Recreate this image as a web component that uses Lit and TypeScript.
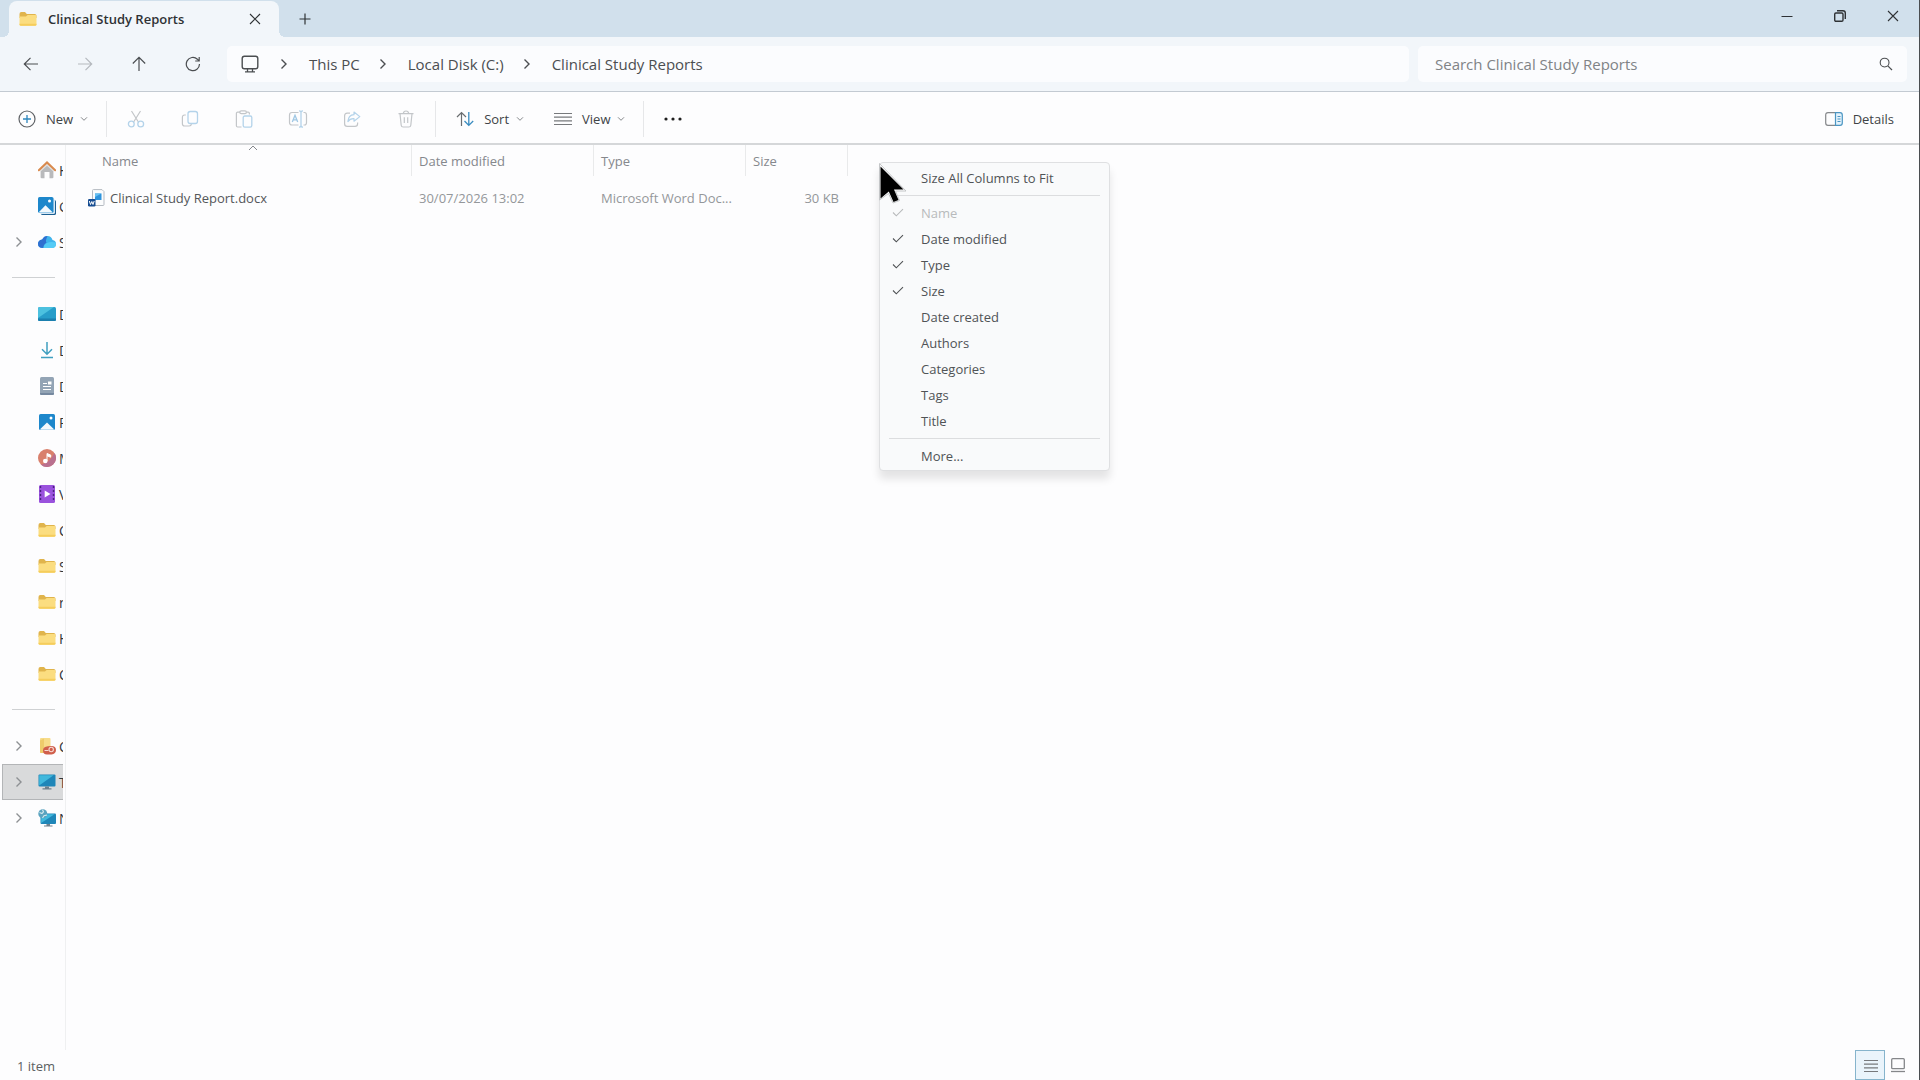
import { LitElement, html, css, svg, nothing, TemplateResult } from "lit";
import { customElement, property, state } from "lit/decorators.js";
import { classMap } from "lit/directives/class-map.js";

type Glyph = { w: number; h: number; body: unknown };

const GLYPHS: Record<string, Glyph> = {
  folder: {
    w: 18, h: 16,
    body: svg`<path d="M.5 3Q.5 1 2.300 1H6l1.800 2H15.800Q17.500 3 17.500 4.800V7H.5Z" fill="#e0b44c"/>
      <path d="M.5 5.600H7L8.600 4H16.300q1.200 0 1.200 1.200V13.300q0 1.500-1.500 1.500H2Q.5 14.800.5 13.300Z" fill="#fbdd80"/>
      <path d="M.5 12.800V13.300q0 1.500 1.500 1.500H16Q17.500 14.800 17.500 13.300V12.800Z" fill="#f5cd5c"/>`,
  },
  close: { w: 12, h: 12, body: svg`<path d="M1 1 11 11M11 1 1 11" stroke="currentColor" stroke-width="1.1"/>` },
  plus: { w: 12, h: 12, body: svg`<path d="M6 .5V11.500M.5 6H11.500" stroke="currentColor" stroke-width="1.2"/>` },
  minimize: { w: 12, h: 12, body: svg`<path d="M.5 6.500H11.500" stroke="currentColor" stroke-width="1"/>` },
  restore: {
    w: 12, h: 12,
    body: svg`<rect x=".7" y="3" width="8.300" height="8.300" rx="1.200" fill="none" stroke="currentColor" stroke-width="1.4"/>
      <path d="M3 .8H9Q11.300 .8 11.300 3V9" fill="none" stroke="currentColor" stroke-width="1.4"/>`,
  },
  back: { w: 16, h: 16, body: svg`<path d="M15 8H1.500M7.500 1.800 1.300 8l6.200 6.200" fill="none" stroke="currentColor" stroke-width="1.2"/>` },
  forward: { w: 16, h: 16, body: svg`<path d="M1 8H14.500M8.500 1.800 14.700 8l-6.200 6.200" fill="none" stroke="currentColor" stroke-width="1.2"/>` },
  up: { w: 16, h: 16, body: svg`<path d="M8 15V1.500M1.800 7.500 8 1.300l6.200 6.200" fill="none" stroke="currentColor" stroke-width="1.2"/>` },
  refresh: {
    w: 16, h: 16,
    body: svg`<path d="M14.500 8A6.600 6.600 0 1 1 12.400 3.200L14 4.800M14.200 1V5H10.200" fill="none" stroke="currentColor" stroke-width="1.2"/>`,
  },
  pc: {
    w: 18, h: 18,
    body: svg`<rect x="1.200" y="1.200" width="15.600" height="12.600" rx="2.200" fill="none" stroke="currentColor" stroke-width="1.400"/>
      <path d="M6.500 14V16.500M11.500 14V16.500M4 16.800H14" fill="none" stroke="currentColor" stroke-width="1.300"/>`,
  },
  chevron: { w: 8, h: 12, body: svg`<path d="M1.500 1.500 6 6l-4.500 4.500" fill="none" stroke="currentColor" stroke-width="1.4"/>` },
  chevronDown: { w: 8, h: 6, body: svg`<path d="M1 1.300 4 4.300l3-3" fill="none" stroke="currentColor" stroke-width="1"/>` },
  chevronUp: { w: 10, h: 6, body: svg`<path d="M1 5 5 1l4 4" fill="none" stroke="currentColor" stroke-width="1"/>` },
  search: {
    w: 14, h: 14,
    body: svg`<circle cx="5.600" cy="5.600" r="4.400" fill="none" stroke="currentColor" stroke-width="1.1"/>
      <path d="M8.800 8.800 13 13" stroke="currentColor" stroke-width="1.2"/>`,
  },
  add: {
    w: 18, h: 18,
    body: svg`<circle cx="9" cy="9" r="8" fill="none" stroke="#5f6266" stroke-width="1.2"/>
      <path d="M9 5V13M5 9H13" stroke="#2f87bd" stroke-width="1.3"/>`,
  },
  cut: {
    w: 18, h: 18,
    body: svg`<path d="M4.500 1 11.700 12.500M13.500 1 6.300 12.500" stroke="#c3c6c9" stroke-width="1.200"/>
      <circle cx="4.300" cy="14" r="2.900" fill="none" stroke="#b4d3ea" stroke-width="1.300"/>
      <circle cx="13.700" cy="14" r="2.900" fill="none" stroke="#b4d3ea" stroke-width="1.300"/>`,
  },
  copy: {
    w: 18, h: 18,
    body: svg`<path d="M4.800 5H3.600Q1.400 5 1.400 7.200V13.800Q1.400 16 3.600 16H8.200Q10.200 16 10.400 14" fill="none" stroke="#c3c6c9" stroke-width="1.200"/>
      <rect x="7" y="1.500" width="9.500" height="12" rx="2.200" fill="none" stroke="#b4d3ea" stroke-width="1.300"/>`,
  },
  paste: {
    w: 18, h: 18,
    body: svg`<path d="M5 2.200H2.600Q1.400 2.200 1.400 3.600V15.800Q1.400 17 2.600 17H6.500M11.500 2.200H13.200Q14.400 2.200 14.400 3.600V4.500" fill="none" stroke="#c3c6c9" stroke-width="1.200"/>
      <rect x="4.800" y=".8" width="6.600" height="2.800" rx="1.400" fill="none" stroke="#c3c6c9" stroke-width="1.200"/>
      <rect x="8.200" y="6" width="8.600" height="11.200" rx="1.600" fill="none" stroke="#b4d3ea" stroke-width="1.300"/>`,
  },
  rename: {
    w: 20, h: 18,
    body: svg`<path d="M10.500 2.500H4Q1.500 2.500 1.500 5V12.500Q1.500 15 4 15H10.500M15.500 2.500H16.500Q18.500 2.500 18.500 5V12.500Q18.500 15 16.500 15H15.500" fill="none" stroke="#c3c6c9" stroke-width="1.200"/>
      <path d="M4.300 12 7 5.200 9.700 12M5.200 9.800H8.800" fill="none" stroke="#9fc7e4" stroke-width="1.300"/>
      <path d="M11 .8Q13 .8 13 2.500V15.500Q13 17.200 11 17.200M15 .8Q13 .8 13 2.500M13 15.500Q13 17.200 15 17.200" fill="none" stroke="#b4d3ea" stroke-width="1.300"/>`,
  },
  share: {
    w: 18, h: 18,
    body: svg`<path d="M7 3.200H4.200Q1.600 3.200 1.600 5.800V13.800Q1.600 16.400 4.200 16.400H12Q14.600 16.400 14.600 13.800V12.500" fill="none" stroke="#c3c6c9" stroke-width="1.200"/>
      <path d="M11 2 16.800 6.600 11 11.200V8.600Q7 8.300 4.900 11.600 5.400 5 11 4.700Z" fill="none" stroke="#b4d3ea" stroke-width="1.200" stroke-linejoin="round"/>`,
  },
  trash: {
    w: 18, h: 18,
    body: svg`<path d="M1.500 3.600H16.500M6.300 3.400Q6.600 1 9 1t2.700 2.400M3 3.800 4.200 15.200Q4.400 17 6.200 17H11.800Q13.600 17 13.800 15.200L15 3.800M7.300 7.200V13M10.700 7.200V13" fill="none" stroke="#c3c6c9" stroke-width="1.200"/>`,
  },
  sort: {
    w: 18, h: 16,
    body: svg`<path d="M5.500 15V1.500M1 6 5.500 1.500 10 6" fill="none" stroke="#6a6d70" stroke-width="1.200"/>
      <path d="M12.800 1V14.500M8.500 10 12.800 14.400 17.200 10" fill="none" stroke="#3a8cc0" stroke-width="1.300"/>`,
  },
  view: { w: 18, h: 14, body: svg`<path d="M0 1.500H18M0 5.200H18M0 8.800H18M0 12.500H18" stroke="#77797c" stroke-width="1.200"/>` },
  more: {
    w: 18, h: 6,
    body: svg`<circle cx="2" cy="3" r="1.600" fill="#1f1f1f"/><circle cx="9" cy="3" r="1.600" fill="#1f1f1f"/><circle cx="16" cy="3" r="1.600" fill="#1f1f1f"/>`,
  },
  details: {
    w: 18, h: 14,
    body: svg`<path d="M10.500 .7H3Q.7 .7 .7 3V11Q.7 13.300 3 13.300H10.500" fill="none" stroke="#85888b" stroke-width="1.200"/>
      <path d="M10.500 .7H15Q17.300 .7 17.300 3V11Q17.300 13.300 15 13.300H10.500Z" fill="#e4f2fb" stroke="#4b95c2" stroke-width="1.200"/>
      <path d="M12.500 4.500H15.500M12.500 7H15.500M12.500 9.500H15.500" stroke="#4b95c2" stroke-width="1"/>`,
  },
  check: { w: 12, h: 10, body: svg`<path d="M1 4.500 4.300 7.800 11 1.100" fill="none" stroke="currentColor" stroke-width="1.1"/>` },
  home: {
    w: 18, h: 18,
    body: svg`<path d="M2.600 8 9 2l6.400 6V16.200Q15.400 17.300 14.300 17.300H11.500V11H6.500v6.300H3.700Q2.600 17.300 2.600 16.200Z" fill="#b9babc"/>
      <path d="M2.600 8 9 2l6.400 6v2.500L9 4.800 2.600 10.500Z" fill="#e2e3e4"/>
      <path d="M.8 9.300 9 1.500l8.200 7.800" fill="none" stroke="#d98a4e" stroke-width="2" stroke-linecap="round"/>`,
  },
  gallery: {
    w: 18, h: 18,
    body: svg`<rect x="3" y="3" width="15" height="15" rx="1.600" fill="#1b5f92"/>
      <rect x="2" y="2" width="15" height="15" rx="1.600" fill="#d8e8f4"/>
      <rect x="0" y="0" width="15.500" height="15.800" rx="1.600" fill="#1d87cb"/>
      <path d="M1 15 7.500 8.300 14.300 15Q14 15.500 13.500 15.500H1.800Z" fill="#f3f9fd"/><circle cx="11.500" cy="4" r="1.500" fill="#fff"/>`,
  },
  cloud: {
    w: 18, h: 18,
    body: svg`<path d="M5 15Q0 15 0 10.700 0 7 4.200 6.400 6 3 9.500 3q3.800 0 5 4 3.500.5 3.500 4t-3.700 4Z" fill="#3fb4ec"/>
      <path d="M5 15Q0 15 0 10.700 0 7 4.200 6.400 6 3 9.500 3 7 8 8.500 9.500 6 11 5 15Z" fill="#2f6fd0"/>
      <path d="M6 15Q5.500 11.500 9 10T17.800 9.500Q18.500 15 14.300 15Z" fill="#55cbf6"/>`,
  },
  desktop: {
    w: 18, h: 16,
    body: svg`<rect y="1" width="18" height="14" rx="1.500" fill="#279dc9"/>
      <path d="M0 12V2.500Q0 1 1.500 1H16Z" fill="#4cc1df"/><path d="M0 12.500H18V13.500Q18 15 16.500 15H1.500Q0 15 0 13.500Z" fill="#1b7fae"/>`,
  },
  download: {
    w: 14, h: 18,
    body: svg`<path d="M7 1V13M2 8.300 7 13.200l5-4.900M1 16.500H13" fill="none" stroke="#3f9fc0" stroke-width="1.500"/>`,
  },
  document: {
    w: 14, h: 18,
    body: svg`<rect y="0" width="14" height="18" rx="1.500" fill="#93a4b5"/><path d="M0 16H14V16.500Q14 18 12.500 18H1.500Q0 18 0 16.500Z" fill="#7689a0"/>
      <path d="M3 6.500H7M3 9.500H11M3 12.500H11" stroke="#fff" stroke-width="1.200"/><rect x="8" y="4.500" width="3.500" height="3" fill="#fff"/>`,
  },
  picture: {
    w: 16, h: 16,
    body: svg`<rect width="16" height="16" rx="1.600" fill="#1d87cb"/>
      <path d="M1 15.300 8 8.500 15 15.300Q14.500 15.800 14 15.800H2Z" fill="#f3f9fd"/><circle cx="12" cy="4" r="1.500" fill="#fff"/>`,
  },
  music: {
    w: 18, h: 18,
    body: svg`<circle cx="9" cy="9" r="9" fill="#d9806c"/><path d="M16.500 4A9 9 0 0 1 3 15.700Q12 14 16.500 4Z" fill="#b9708f"/>
      <circle cx="7.300" cy="12" r="2.300" fill="#fff"/><path d="M9 12V4.500L12.700 6V8.200L9 6.800" fill="#fff" stroke="#fff" stroke-width="1"/>`,
  },
  video: {
    w: 16, h: 18,
    body: svg`<rect width="16" height="18" rx="1.500" fill="#9a52dd"/><path d="M1.500 1V17M14.500 1V17" stroke="#4a2280" stroke-width="1.400" stroke-dasharray="2 2"/>
      <path d="M5.700 5.500 11.500 9l-5.800 3.500Z" fill="#fff"/>`,
  },
  folderUser: {
    w: 18, h: 18,
    body: svg`<path d="M2 2Q2 1 3 1H11.500Q12.500 1 12.500 2V16H3Q2 16 2 15Z" fill="#f7dc8a"/><path d="M2 3.500 6 1.500V16H3Q2 16 2 15Z" fill="#eecb6b"/>
      <path d="M5 13.500Q5 9.500 10 9.200q2-.2 3.400-.2Q18 9.200 18 13t-4.500 4.500H9Q5 17.500 5 13.500Z" fill="#d05f4c"/>
      <circle cx="13.200" cy="12.500" r="2.200" fill="none" stroke="#f6d9d3" stroke-width="1.100"/><path d="M6.500 13.500h4" stroke="#f6d9d3" stroke-width="1"/>`,
  },
  monitor: {
    w: 18, h: 16,
    body: svg`<rect x=".5" y=".5" width="17" height="12" rx="1" fill="#1f86b8"/><path d="M1.200 11.500V1.200H15.500Z" fill="#41b8dc"/>
      <path d="M7 12.500H11V14.300H13.500V15.500H4.500V14.300H7Z" fill="#70808c"/>`,
  },
  network: {
    w: 18, h: 18,
    body: svg`<rect x="2.500" y="4.500" width="15.500" height="10.500" rx="1" fill="#1f86b8"/><path d="M3.200 14V5.200H16.500Z" fill="#41b8dc"/>
      <path d="M8.500 15H12V16.500H14.500V17.500H6V16.500H8.500Z" fill="#70808c"/><circle cx="4.800" cy="4.800" r="4.500" fill="#5aa3bf"/>
      <path d="M1.500 3.500 4 4.500 5.500 3 4.500.8M4.500 9 6 6.800 9 6" fill="none" stroke="#d4e9ee" stroke-width="1.100"/>`,
  },
  word: {
    w: 18, h: 18,
    body: svg`<path d="M4.500 1.500Q4.500.6 5.400.6H14l2 2V15.500Q16 16.500 15 16.500H5.400Q4.500 16.500 4.500 15.500Z" fill="#fbfcfd" stroke="#b5bbc2" stroke-width="1"/>
      <rect x="7" y="4.500" width="6.500" height="6.500" fill="#2f93dc"/><path d="M7 4.500h6.500L7 8Z" fill="#66c0f2"/>
      <rect x="0" y="10" width="7.500" height="7.500" rx="1.200" fill="#174d92"/>
      <path d="M1.300 12 2.500 15.500 3.800 12.500 5 15.500 6.200 12" fill="none" stroke="#fff" stroke-width="1"/>`,
  },
  listView: { w: 14, h: 14, body: svg`<path d="M0 1.500H14M0 5.200H14M0 8.800H14M0 12.500H14" stroke="#77797c" stroke-width="1.200"/>` },
  tileView: {
    w: 14, h: 16,
    body: svg`<rect x=".7" y="1.700" width="12.600" height="10" rx="1" fill="none" stroke="#85878a" stroke-width="1.300"/><path d="M0 14.500H14" stroke="#85878a" stroke-width="1.300"/>`,
  },
};

const icon = (name: string): TemplateResult => {
  const g = GLYPHS[name];
  return html`<svg class="icon" width=${g.w} height=${g.h} viewBox="0 0 ${g.w} ${g.h}" aria-hidden="true">${g.body}</svg>`;
};

const base = css`
  * { box-sizing: border-box; }
  .icon { display: block; flex: none; }
  button {
    display: flex; align-items: center; justify-content: center;
    border: 0; padding: 0; background: none; color: inherit; font: inherit;
  }
`;

@customElement("window-tabs")
class WindowTabs extends LitElement {
  @property() label = "";
  static styles = [base, css`
    :host { display: flex; align-items: flex-end; height: 37px; padding-left: 9px; background: #d1e0ec; color: #2f3235; }
    .tab {
      position: relative; display: flex; align-items: center; width: 270px; height: 36px; padding: 0 10px;
      background: #f2f6fa; border-radius: 8px 8px 0 0; font-weight: 600; font-size: 13px;
    }
    .tab::before, .tab::after { content: ""; position: absolute; bottom: 0; width: 6px; height: 6px; }
    .tab::before { right: 100%; background: radial-gradient(circle at 0 0, transparent 6px, #f2f6fa 6px); }
    .tab::after { left: 100%; background: radial-gradient(circle at 100% 0, transparent 6px, #f2f6fa 6px); }
    .label { flex: 1; margin-left: 11px; }
    .tab button { width: 28px; height: 28px; }
    .add { width: 52px; height: 36px; }
    .controls { display: flex; margin-left: auto; align-self: flex-start; }
    .controls button { width: 53px; height: 32px; }
  `];
  render() {
    return html`
      <div class="tab">${icon("folder")}<span class="label">${this.label}</span>
        <button aria-label="Close tab">${icon("close")}</button></div>
      <button class="add" aria-label="New tab">${icon("plus")}</button>
      <div class="controls">
        <button aria-label="Minimize">${icon("minimize")}</button>
        <button aria-label="Restore">${icon("restore")}</button>
        <button aria-label="Close">${icon("close")}</button>
      </div>`;
  }
}

@customElement("address-bar")
class AddressBar extends LitElement {
  @property({ attribute: false }) path: string[] = [];
  static styles = [base, css`
    :host {
      display: flex; align-items: center; height: 55px; padding: 0 12px 0 4px;
      background: #f2f6fa; border-bottom: 1px solid #c3cad2; color: #4b4e51; font-size: 15px;
    }
    .nav { width: 54px; height: 40px; }
    .nav:disabled { color: #b5b9be; }
    .crumbs {
      display: flex; align-items: center; flex: 1; height: 36px; margin-left: 7px; padding-left: 14px;
      background: #fbfcfe; border-radius: 5px;
    }
    .crumbs .icon { margin-right: 21px; }
    .crumbs a { color: inherit; text-decoration: none; margin-right: 19px; }
    .search {
      display: flex; align-items: center; width: 489px; height: 36px; margin-left: 9px; padding: 0 14px 0 17px;
      background: #fbfcfe; border-radius: 5px;
    }
    .search input { flex: 1; min-width: 0; border: 0; padding: 0; background: none; font: inherit; color: inherit; outline: 0; }
    .search input::placeholder { color: #808386; opacity: 1; }
  `];
  render() {
    return html`
      <button class="nav" aria-label="Back">${icon("back")}</button>
      <button class="nav" aria-label="Forward" disabled>${icon("forward")}</button>
      <button class="nav" aria-label="Up">${icon("up")}</button>
      <button class="nav" aria-label="Refresh">${icon("refresh")}</button>
      <nav class="crumbs" aria-label="Path">
        ${icon("pc")}${this.path.map((p) => html`${icon("chevron")}<a href="#">${p}</a>`)}
      </nav>
      <label class="search">
        <input type="text" aria-label="Search" placeholder="Search ${this.path[this.path.length - 1]}" />
        ${icon("search")}
      </label>`;
  }
}

@customElement("command-bar")
class CommandBar extends LitElement {
  static styles = [base, css`
    :host {
      display: flex; align-items: center; height: 53px; padding: 2px 25px 0 0;
      background: #fdfdfe; border-bottom: 2px solid #d5d7d9; color: #404346; font-size: 13px;
    }
    .menu { gap: 10px; height: 36px; padding: 0 16px 0 18px; }
    .menu.tight { padding-right: 12px; }
    .caret { margin-left: -3px; color: #85888b; }
    .tool { width: 54px; height: 36px; }
    .rule { width: 1px; height: 36px; margin: 0 2px; background: #e6e7e9; }
    .details { gap: 10px; height: 36px; margin-left: auto; }
  `];
  private menu(glyph: string, label: string, tight = false) {
    return html`<button class=${classMap({ menu: true, tight })}>${icon(glyph)}<span>${label}</span><span class="caret">${icon("chevronDown")}</span></button>`;
  }
  render() {
    const tools = [["cut", "Cut"], ["copy", "Copy"], ["paste", "Paste"], ["rename", "Rename"], ["share", "Share"], ["trash", "Delete"]];
    return html`
      ${this.menu("add", "New")}<span class="rule"></span>
      ${tools.map(([g, l]) => html`<button class="tool" aria-label=${l} disabled>${icon(g)}</button>`)}
      <span class="rule"></span>
      ${this.menu("sort", "Sort", true)}${this.menu("view", "View")}
      <span class="rule"></span>
      <button class="tool" aria-label="More">${icon("more")}</button>
      <button class="details">${icon("details")}<span>Details</span></button>`;
  }
}

type Place = { glyph: string; label: string; open?: boolean; selected?: boolean } | null;

const PLACES: Place[] = [
  { glyph: "home", label: "Home" },
  { glyph: "gallery", label: "Gallery" },
  { glyph: "cloud", label: "S", open: true },
  null,
  { glyph: "desktop", label: "Desktop" },
  { glyph: "download", label: "Downloads" },
  { glyph: "document", label: "Documents" },
  { glyph: "picture", label: "Pictures" },
  { glyph: "music", label: "Music" },
  { glyph: "video", label: "Videos" },
  { glyph: "folder", label: "C" },
  { glyph: "folder", label: "S" },
  { glyph: "folder", label: "r" },
  { glyph: "folder", label: "H" },
  { glyph: "folder", label: "C" },
  null,
  { glyph: "folderUser", label: "C", open: true },
  { glyph: "monitor", label: "This PC", open: true, selected: true },
  { glyph: "network", label: "Network", open: true },
];

@customElement("side-tree")
class SideTree extends LitElement {
  static styles = [base, css`
    :host { display: block; width: 66px; padding: 7px 2px 0 0; border-right: 1px solid #eff0f1; }
    .list { margin: 0; padding: 0 0 0 2px; list-style: none; overflow: hidden; }
    .row {
      display: flex; align-items: center; height: 36px; border: 1px solid transparent; border-right: 0;
      color: #33363a; font-size: 14px; white-space: nowrap;
    }
    .row.selected { background: #d9dadb; border-color: #b3b5b7; }
    .twist { display: flex; justify-content: center; flex: none; width: 32px; color: #8d9093; }
    .glyph { display: flex; justify-content: center; flex: none; width: 18px; margin: 0 3px; }
    .rule { height: 36px; padding: 17px 8px 0 10px; }
    .rule::before { content: ""; display: block; height: 1px; background: #cfd1d3; }
  `];
  render() {
    return html`<ul class="list">${PLACES.map((p) => p
      ? html`<li class=${classMap({ row: true, selected: !!p.selected })}>
          <span class="twist">${p.open ? icon("chevron") : nothing}</span>
          <span class="glyph">${icon(p.glyph)}</span><span>${p.label}</span></li>`
      : html`<li class="rule"></li>`)}</ul>`;
  }
}

@customElement("file-list")
class FileList extends LitElement {
  static styles = [base, css`
    :host { display: block; flex: 1; }
    .table { table-layout: fixed; width: 782px; border-collapse: separate; border-spacing: 0; font-size: 13px; color: #94979a; }
    .name { width: 346px; } .date { width: 182px; } .type { width: 152px; } .size { width: 102px; }
    .head { height: 31px; padding: 1px 7px 0; border-right: 1px solid #e9eaeb; font-weight: 400; text-align: left; color: #85888d; }
    .head.name { position: relative; padding-left: 36px; }
    .caret { position: absolute; top: 0; left: 50%; margin-left: 9px; }
    .cell { height: 43px; padding: 0 7px; white-space: nowrap; }
    .cell.name { padding-left: 22px; color: #54575a; }
    .cell.size { padding-right: 9px; text-align: right; }
    .file { display: flex; align-items: center; gap: 4px; }
  `];
  render() {
    return html`<table class="table">
      <thead><tr>
        <th class="head name">Name<span class="caret">${icon("chevronUp")}</span></th>
        <th class="head date">Date modified</th><th class="head type">Type</th><th class="head size">Size</th>
      </tr></thead>
      <tbody><tr>
        <td class="cell name"><span class="file">${icon("word")}Clinical Study Report.docx</span></td>
        <td class="cell date">30/07/2026 13:02</td><td class="cell type">Microsoft Word Doc...</td><td class="cell size">30 KB</td>
      </tr></tbody>
    </table>`;
  }
}

@customElement("column-menu")
class ColumnMenu extends LitElement {
  @state() private columns: { label: string; on?: boolean; fixed?: boolean }[] = [
    { label: "Name", on: true, fixed: true }, { label: "Date modified", on: true }, { label: "Type", on: true },
    { label: "Size", on: true }, { label: "Date created" }, { label: "Authors" }, { label: "Categories" },
    { label: "Tags" }, { label: "Title" },
  ];
  static styles = [base, css`
    :host {
      display: block; width: 231px; padding: 2px 0 1px; background: #f9fafb; border: 1px solid #dfe0e2; border-radius: 4px;
      box-shadow: 0 8px 8px rgba(0, 0, 0, 0.1); color: #505356; font-size: 13px;
    }
    .item { width: 100%; height: 26px; justify-content: flex-start; }
    .item:disabled { color: #b8babc; }
    .mark { width: 41px; padding-left: 12px; flex: none; }
    .rule { height: 1px; margin: 4px 9px; border: 0; background: #dcdddf; }
  `];
  render() {
    return html`
      <button class="item" role="menuitem"><span class="mark"></span>Size All Columns to Fit</button>
      <hr class="rule" />
      ${this.columns.map((c) => html`<button class="item" role="menuitemcheckbox" aria-checked=${c.on ? "true" : "false"} ?disabled=${!!c.fixed}>
        <span class="mark">${c.on ? icon("check") : nothing}</span>${c.label}</button>`)}
      <hr class="rule" />
      <button class="item" role="menuitem"><span class="mark"></span>More...</button>`;
  }
}

@customElement("app-root")
class AppRoot extends LitElement {
  static styles = [base, css`
    :host {
      position: relative; display: flex; flex-direction: column; min-height: 100vh; box-sizing: border-box;
      border-right: 1px solid #4a4d50; background: #fdfdfe;
      font-family: "Open Sans", "Noto Sans", sans-serif;
    }
    .body { display: flex; flex: 1; }
    .status { display: flex; align-items: center; height: 30px; padding: 0 8px 0 17px; color: #5c5f62; font-size: 13px; }
    .count { flex: 1; padding-top: 2px; }
    .mode { width: 26px; height: 30px; }
    .mode.on { width: 30px; padding: 2px 0 0 2px; background: #eaf4fb; border: 1px solid #86b4cc; }
    .popup { position: absolute; left: 879px; top: 162px; }
    .pointer { position: absolute; left: 878px; top: 162px; }
  `];
  render() {
    return html`
      <window-tabs label="Clinical Study Reports"></window-tabs>
      <address-bar .path=${["This PC", "Local Disk (C:)", "Clinical Study Reports"]}></address-bar>
      <command-bar></command-bar>
      <main class="body"><side-tree></side-tree><file-list></file-list></main>
      <footer class="status">
        <span class="count">1 item</span>
        <button class="mode on" aria-label="Details view">${icon("listView")}</button>
        <button class="mode" aria-label="Large icons view">${icon("tileView")}</button>
      </footer>
      <column-menu class="popup" role="menu"></column-menu>
      <svg class="pointer" width="30" height="42" viewBox="0 0 30 42" aria-hidden="true">
        <path d="M1.500 1.500V38L10.500 31.500 15 41 21.500 38.500 17.500 29H28Z" fill="#fff" stroke="#c4c6c8" stroke-width="1"/>
        <path d="M2.500 4.500V36.500L10.800 29.500 15.500 40 20.500 38 16 27.500H25.500Z" fill="#000"/>
      </svg>`;
  }
}
